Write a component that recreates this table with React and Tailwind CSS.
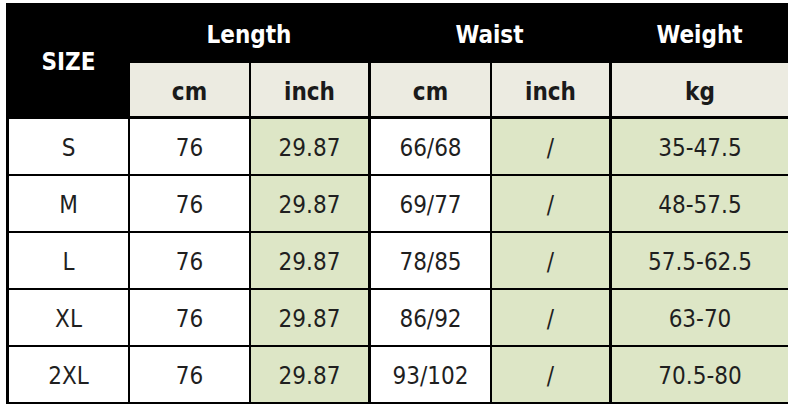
import React from 'react';

const rows = [
  ['S', '76', '29.87', '66/68', '/', '35-47.5'],
  ['M', '76', '29.87', '69/77', '/', '48-57.5'],
  ['L', '76', '29.87', '78/85', '/', '57.5-62.5'],
  ['XL', '76', '29.87', '86/92', '/', '63-70'],
  ['2XL', '76', '29.87', '93/102', '/', '70.5-80'],
];

const cellBg = ['bg-white', 'bg-white', 'bg-[#dde6c6]', 'bg-white', 'bg-[#dde6c6]', 'bg-[#dde6c6]'];

const App = () => {
  return (
    <div className="w-[788px] h-[407px] bg-white pt-[3px] pl-[6px] overflow-hidden font-['DejaVu_Sans_Condensed','DejaVu_Sans',sans-serif]">
      <div className="grid grid-cols-[119px_119px_117px_120px_117px_177px] grid-rows-[58px_54px_repeat(5,55px)] gap-[2px] bg-black pl-[3px] pb-[2px]">
        {/* Header */}
        <div className="row-span-2 flex items-center justify-center pt-[4px] text-white font-bold text-[24px]">
          SIZE
        </div>
        <div className="col-span-2 flex items-center justify-center pt-[6px] text-white font-bold text-[24px]">
          Length
        </div>
        <div className="col-span-2 flex items-center justify-center pt-[6px] text-white font-bold text-[24px]">
          Waist
        </div>
        <div className="flex items-center justify-center pt-[6px] text-white font-bold text-[24px]">
          Weight
        </div>

        {/* Units */}
        {['cm', 'inch', 'cm', 'inch', 'kg'].map((u, i) => (
          <div
            key={i}
            className={`flex items-center justify-center pt-[4px] mb-[1px] bg-[#ecebe1] text-[#1a1a1a] font-bold text-[24px] ${i === 2 || i === 4 ? 'border-l border-black' : ''}`}
          >
            {u}
          </div>
        ))}

        {/* Data rows */}
        {rows.map((r) =>
          r.map((v, j) => (
            <div
              key={r[0] + j}
              className={`flex items-center justify-center pt-[3px] text-[#1f1f1f] text-[24px] ${cellBg[j]} ${j === 3 || j === 5 ? 'border-l border-black' : ''}`}
            >
              {v}
            </div>
          ))
        )}
      </div>
    </div>
  );
};

export default App;
